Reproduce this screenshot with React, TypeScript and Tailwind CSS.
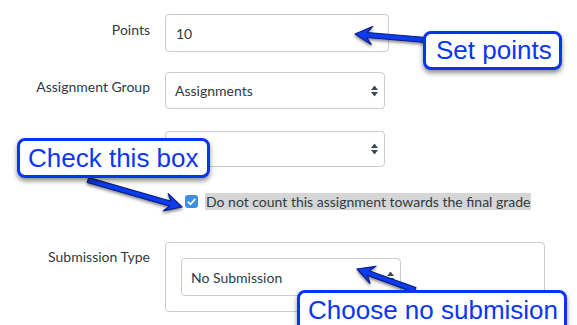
import React from "react";

type Pt = [number, number];

// arrow polygon from tail to tip, with a swept head
function arrowPoints(tail: Pt, tip: Pt, shaft = 5, headLen = 17, headW = 18) {
  const dx = tip[0] - tail[0];
  const dy = tip[1] - tail[1];
  const len = Math.hypot(dx, dy);
  const ux = dx / len;
  const uy = dy / len;
  const nx = -uy;
  const ny = ux;
  const bx = tip[0] - ux * headLen;
  const by = tip[1] - uy * headLen;
  const nbx = tip[0] - ux * (headLen - 5);
  const nby = tip[1] - uy * (headLen - 5);
  const p: Pt[] = [
    [tail[0] + (nx * shaft) / 2, tail[1] + (ny * shaft) / 2],
    [nbx + (nx * shaft) / 2, nby + (ny * shaft) / 2],
    [bx + (nx * headW) / 2, by + (ny * headW) / 2],
    tip,
    [bx - (nx * headW) / 2, by - (ny * headW) / 2],
    [nbx - (nx * shaft) / 2, nby - (ny * shaft) / 2],
    [tail[0] - (nx * shaft) / 2, tail[1] - (ny * shaft) / 2],
  ];
  return p.map((q) => q.join(",")).join(" ");
}

function Spinner() {
  return (
    <svg width="7" height="11" viewBox="0 0 7 11" className="absolute right-[6px] top-1/2 -translate-y-1/2">
      <path d="M3.5 0 L7 4.5 L0 4.5 Z" fill="#394b58" />
      <path d="M0 6.5 L7 6.5 L3.5 11 Z" fill="#394b58" />
    </svg>
  );
}

function Callout({ text, className }: { text: string; className: string }) {
  return (
    <div
      className={
        "absolute bg-white border-[3px] border-[#0a33f2] rounded-[8px] shadow-[0_3px_5px_rgba(0,0,0,0.45)] text-[#0b36f4] text-[26px] leading-[32px] whitespace-nowrap " +
        className
      }
      style={{ fontFamily: '"Liberation Sans", Arial, sans-serif' }}
    >
      {text}
    </div>
  );
}

export default function App() {
  const arrows: [Pt, Pt][] = [
    [[426, 40], [355, 34]],
    [[88, 180], [182, 207]],
    [[415, 290], [357, 269]],
  ];

  return (
    <div
      className="relative w-[577px] h-[325px] overflow-hidden bg-white text-[#2d3b45] text-[14px]"
      style={{ fontFamily: 'Lato, "Noto Sans", sans-serif' }}
    >
      <div className="pt-[14px]">
        <div className="flex items-start">
          <div className="w-[150px] text-right pt-[6px] leading-5">Points</div>
          <div className="ml-[15px] w-[224px] h-[38px] border border-[#c7cdd1] rounded-[4px] px-[10px] flex items-center">
            10
          </div>
        </div>

        <div className="flex items-start mt-[20px]">
          <div className="w-[150px] text-right pt-[5px] leading-5">Assignment Group</div>
          <div className="relative ml-[15px] w-[220px] h-[37px] border border-[#c7cdd1] rounded-[4px] px-[9px] flex items-center">
            Assignments
            <Spinner />
          </div>
        </div>

        <div className="flex items-start mt-[22px]">
          <div className="w-[150px]" />
          <div className="relative ml-[15px] w-[220px] h-[36px] border border-[#c7cdd1] rounded-[4px]">
            <Spinner />
          </div>
        </div>

        <div className="flex items-center mt-[26px] pl-[185px]">
          <div className="w-[13px] h-[13px] rounded-[3px] bg-[#3d8fe6] flex items-center justify-center">
            <svg width="9" height="8" viewBox="0 0 9 8">
              <path d="M1.2 4.2 L3.5 6.3 L7.8 1.4" stroke="white" strokeWidth="1.7" fill="none" strokeLinecap="round" strokeLinejoin="round" />
            </svg>
          </div>
          <div className="ml-[7px] bg-[#d6d6d6] leading-[17px] px-[1px]">
            Do not count this assignment towards the final grade
          </div>
        </div>

        <div className="flex items-start mt-[32px]">
          <div className="w-[150px] text-right pt-[5px] leading-5">Submission Type</div>
          <div className="ml-[15px] w-[380px] h-[70px] border border-[#c7cdd1] rounded-[4px] p-[15px]">
            <div className="relative w-[220px] h-[38px] border border-[#c7cdd1] rounded-[4px] px-[9px] flex items-center">
              No Submission
              <Spinner />
            </div>
          </div>
        </div>
      </div>

      <svg className="absolute inset-0 pointer-events-none" width="577" height="325">
        <defs>
          <filter id="sh" x="-20%" y="-40%" width="140%" height="180%">
            <feDropShadow dx="0" dy="2" stdDeviation="1.6" floodColor="#000" floodOpacity="0.45" />
          </filter>
        </defs>
        {arrows.map(([a, b], i) => (
          <polygon
            key={i}
            points={arrowPoints(a, b)}
            fill="#0b3cf0"
            stroke="#0a1f80"
            strokeWidth="1.2"
            strokeLinejoin="round"
            filter="url(#sh)"
          />
        ))}
      </svg>

      <Callout text="Set points" className="left-[423px] top-[31px] w-[139px] h-[39px] pl-[10px] leading-[33px]" />
      <Callout text="Check this box" className="left-[17px] top-[138px] w-[193px] h-[40px] pl-[8px] leading-[34px]" />
      <Callout text="Choose no submision" className="left-[297px] top-[290px] w-[270px] h-[46px] pl-[8px] leading-[34px]" />
    </div>
  );
}
